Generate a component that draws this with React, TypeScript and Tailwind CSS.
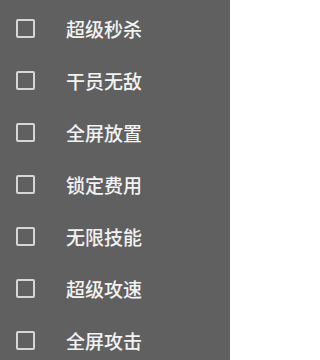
const items = ['超级秒杀', '干员无敌', '全屏放置', '锁定费用', '无限技能', '超级攻速', '全屏攻击'];

export default function App() {
  return (
    <div
      className="w-[230px] h-[360px] overflow-hidden bg-[#606060] pt-[2px]"
      style={{ fontFamily: '"Noto Sans CJK SC", "Noto Sans", sans-serif' }}
    >
      {items.map((label) => (
        <label key={label} className="flex items-center h-[52px] pl-[16px] cursor-pointer">
          <span className="w-[19px] h-[19px] border-2 border-[#d6d6d6] rounded-[2px] shrink-0" />
          <span className="ml-[31px] text-[19px] leading-none font-medium text-[#f2f2f2]">{label}</span>
        </label>
      ))}
    </div>
  );
}
